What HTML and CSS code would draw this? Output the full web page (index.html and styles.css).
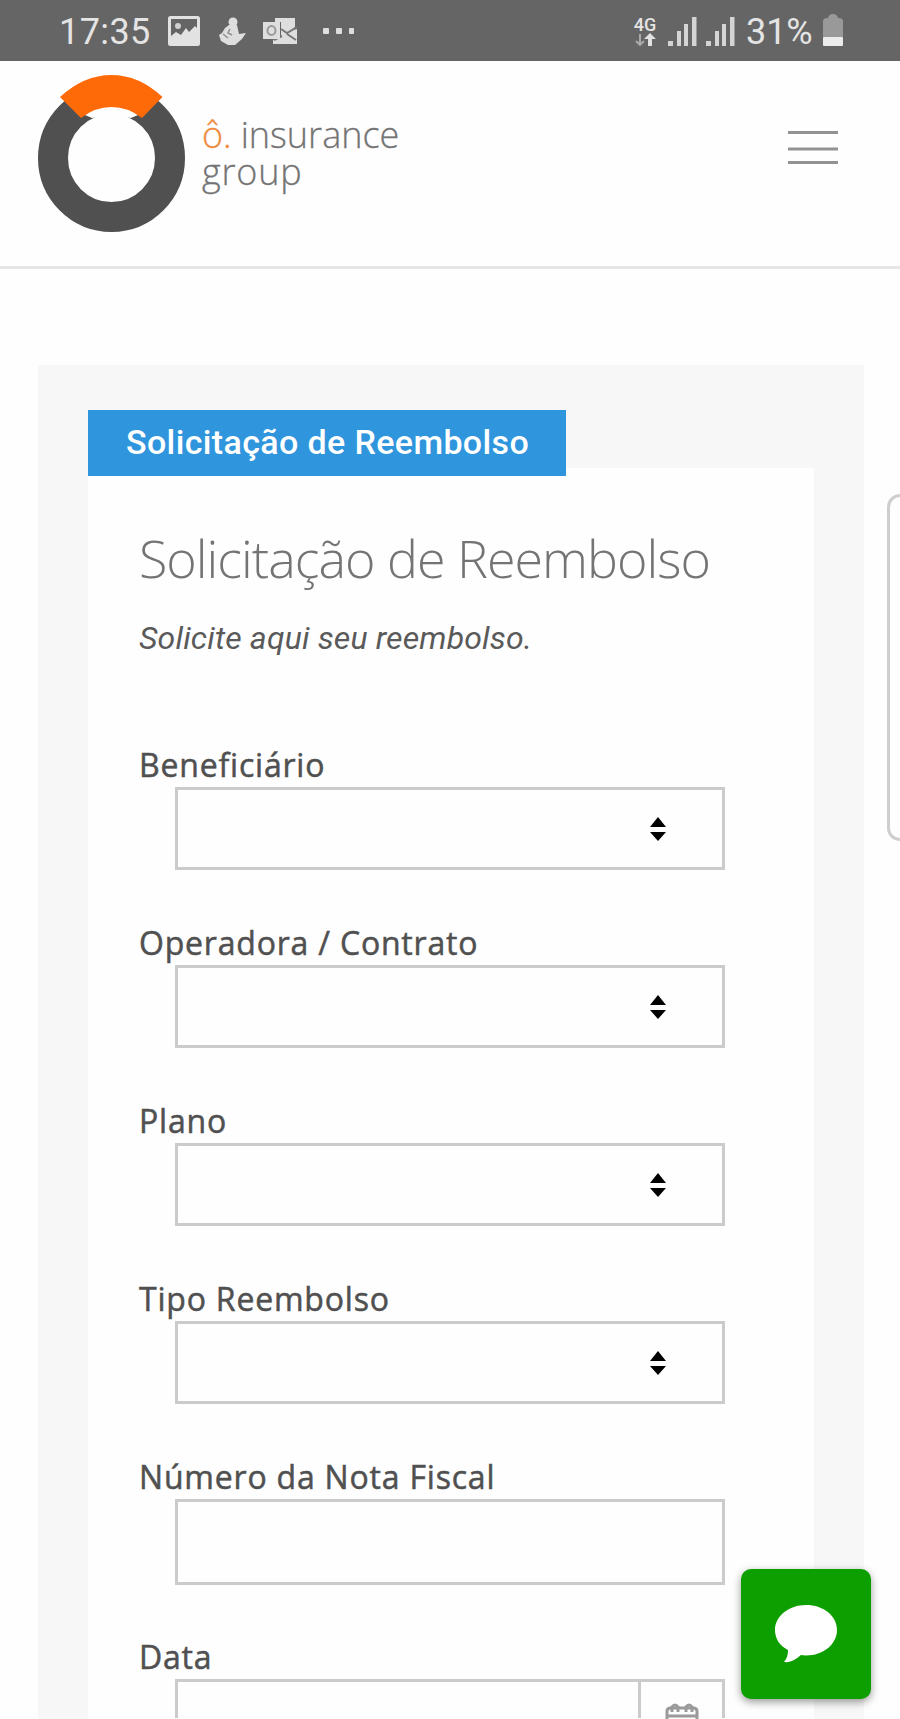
FILE: index.html
```
<!DOCTYPE html>
<html lang="pt-BR">
<head>
<meta charset="utf-8">
<title>Solicitação de Reembolso</title>
<link rel="stylesheet" href="styles.css">
</head>
<body>
<div class="status">
  <div class="status-left">
    <span class="clock">17:35</span>
    <svg class="ic-image" width="32" height="30" viewBox="0 0 32 30"><rect x="1.5" y="1.5" width="29" height="27" rx="1" fill="none" stroke="#e2e2e2" stroke-width="3"/><circle cx="10" cy="10" r="3" fill="#d0d0d0"/><path d="M3 27V20l5-4 5 3 5-7 3 4 6-6 2 2v15z" fill="#e2e2e2"/></svg>
    <svg class="ic-person" width="28" height="28" viewBox="0 0 28 28" fill="#dedede"><circle cx="15" cy="5" r="4.500"/><path d="M11 8h8l2 9 7-1-4 6-7 6h-7l-7-4-2-6 3-2 3-5z"/><path d="M5 17l5 4M12 12l-2 4 4 2" fill="none" stroke="#909090" stroke-width="1.500"/></svg>
    <svg class="ic-mail" width="35" height="28" viewBox="0 0 35 28"><path d="M12 1h20v9l-5 4 7-2v15H10v-4l8-4V5h-6z" fill="#dedede"/><path d="M18 12l6 4 10-6M24 17l9 6M11 23l8-4" fill="none" stroke="#777" stroke-width="2"/><rect x="0" y="5" width="17" height="17" fill="#dedede"/><ellipse cx="8.500" cy="13.500" rx="4" ry="4.500" fill="none" stroke="#999" stroke-width="2"/></svg>
    <svg class="ic-more" width="32" height="6" viewBox="0 0 32 6" fill="#dedede"><rect x="0" y="0" width="6" height="6" rx="1"/><rect x="13" y="0" width="6" height="6" rx="1"/><rect x="26" y="0" width="5" height="6" rx="1"/></svg>
  </div>
  <div class="status-right">
    <div class="net"><span class="net-type">4G</span><svg width="21" height="13" viewBox="0 0 21 13"><path d="M5 1v10M1 8l4 4 4-4" fill="none" stroke="#aaa" stroke-width="2"/><path d="M15 0l6 6h-4v7h-4V6H9z" fill="#e2e2e2"/></svg></div>
    <svg class="sig" width="29" height="29" viewBox="0 0 29 29" fill="#d4d4d4"><rect x="0" y="24" width="5" height="5"/><rect x="9" y="14" width="4" height="15"/><rect x="16" y="7" width="4" height="22"/><rect x="24" y="0" width="4.500" height="29"/></svg>
    <svg class="sig" width="29" height="29" viewBox="0 0 29 29" fill="#d4d4d4"><rect x="0" y="24" width="5" height="5"/><rect x="9" y="14" width="4" height="15"/><rect x="16" y="7" width="4" height="22"/><rect x="24" y="0" width="4.500" height="29"/></svg>
    <span class="pct">31%</span>
    <svg class="batt" width="22" height="33" viewBox="0 0 22 33"><path d="M1 7Q1 4 6 4Q7 0 11 0t5 4q5 0 5 3v16H1z" fill="#999"/><rect x="1" y="23" width="20" height="9" rx="1" fill="#ececec"/></svg>
  </div>
</div>
<header class="header">
  <svg class="logo" width="150" height="160" viewBox="0 0 150 160"><ellipse cx="74.500" cy="83" rx="58.500" ry="59" fill="none" stroke="#505050" stroke-width="30"/><path d="M48 40Q74 20 101 40L94 43 88 42 93 46Q74 60 56 46L61 42 55 43z" fill="#fefefe"/><path d="M23 22Q47 0 74.500 0t51 22L105 43Q91 32 74.500 32T44 43z" fill="#ff6a08"/></svg>
  <div class="brand"><div class="brand-line"><span class="brand-o">ô.</span><span>insurance</span></div><div class="brand-group">group</div></div>
  <svg class="menu" width="52" height="36" viewBox="0 0 52 36" stroke="#929292" stroke-width="3"><path d="M1 3.500h50M1 20h50M1 33.500h50"/></svg>
</header>
<main class="panel">
  <div class="tab">Solicitação de Reembolso</div>
  <section class="card">
    <h1 class="title">Solicitação de Reembolso</h1>
    <p class="intro">Solicite aqui seu reembolso.</p>
    <div class="field"><label>Beneficiário</label><div class="box"><svg width="18" height="26" viewBox="0 0 18 26"><path d="M9 1l8 10H1zM1 16h16l-8 9z"/></svg></div></div>
    <div class="field"><label>Operadora / Contrato</label><div class="box"><svg width="18" height="26" viewBox="0 0 18 26"><path d="M9 1l8 10H1zM1 16h16l-8 9z"/></svg></div></div>
    <div class="field"><label>Plano</label><div class="box"><svg width="18" height="26" viewBox="0 0 18 26"><path d="M9 1l8 10H1zM1 16h16l-8 9z"/></svg></div></div>
    <div class="field"><label>Tipo Reembolso</label><div class="box"><svg width="18" height="26" viewBox="0 0 18 26"><path d="M9 1l8 10H1zM1 16h16l-8 9z"/></svg></div></div>
    <div class="field field-text"><label>Número da Nota Fiscal</label><div class="box"></div></div>
    <div class="field field-last"><label>Data</label><div class="box box-date"><div class="date-btn"><svg width="34" height="16" viewBox="0 0 34 16" fill="none" stroke="#9a9a9a" stroke-width="3"><path d="M2 16V8q0-3 4-3h22q4 0 4 3v8M2 13h30"/><path d="M7 9V4q3-4 6 0v5M21 9V4q3-4 6 0v5"/></svg></div></div></div>
  </section>
</main>
<div class="side-tab"></div>
<div class="chat"><svg width="64" height="60" viewBox="0 0 64 60"><path d="M32 1C15 1 1 12 1 26c0 9 5 16 13 20 0 5-1 8-4 12 7 1 12-3 17-7l5 .5c17 0 31-11 31-25.500S49 1 32 1z" fill="#fff"/></svg></div>
</body>
</html>
```
FILE: styles.css
```
* { box-sizing: border-box; }
body { margin: 0; width: 900px; height: 1719px; overflow: hidden; position: relative; background: #fefefe; color: #505050; font-family: "Open Sans", sans-serif; }
.status { height: 61px; background: #656565; color: #e4e4e4; display: flex; justify-content: space-between; padding: 0 56px 0 59px; font-family: Roboto, sans-serif; }
.status-left, .status-right { display: flex; align-items: center; }
.clock { font-size: 36px; width: 93px; letter-spacing: .4px; padding-top: 2px; }
.ic-image { margin-left: 16px; }
.ic-person { margin-left: 18px; }
.ic-mail { margin-left: 17px; }
.ic-more { margin-left: 25px; }
.net { display: flex; flex-direction: column; align-items: center; width: 24px; margin-right: 11px; }
.net-type { font-size: 18px; line-height: 17px; font-weight: 500; }
.sig { margin-right: 9px; margin-top: 2px; }
.pct { font-size: 36px; width: 69px; margin-left: 2px; padding-top: 3px; letter-spacing: -.1px; }
.batt { margin-left: 7px; }
.header { height: 208px; border-bottom: 3px solid #e6e6e6; display: flex; padding: 14px 61px 0 37px; }
.logo { flex: none; }
.brand { margin: 41px auto 0 15px; font-size: 36px; line-height: 37px; font-weight: 300; color: #747474; white-space: nowrap; -webkit-text-stroke: .3px; }
.brand-line { display: flex; gap: 9px; }
.brand-o { color: #f08a3c; }
.brand-group { letter-spacing: .8px; }
.menu { margin-top: 54px; }
.panel { margin: 96px 0 0 38px; width: 826px; height: 1354px; background: #f7f7f7; padding: 45px 50px 0; }
.tab { position: relative; width: 478px; height: 66px; background: #2f95dc; color: #fff; padding-left: 38px; font: 500 34px/65px Roboto, sans-serif; letter-spacing: .37px; white-space: nowrap; }
.card { margin-top: -8px; height: 1251px; overflow: hidden; background: #fefefe; padding: 54px 50px 0 51px; }
.title { margin: 0; font-size: 52px; line-height: 72px; font-weight: 300; letter-spacing: -1px; color: #747474; white-space: nowrap; }
.intro { margin: 24px 0 0; font: italic 400 32px/40px Roboto, sans-serif; letter-spacing: .15px; color: #5a5a5a; white-space: nowrap; }
.field { height: 178px; }
.intro + .field { margin-top: 86px; }
.field label { display: block; height: 42px; font-size: 32px; line-height: 42px; letter-spacing: .8px; -webkit-text-stroke: .5px; white-space: nowrap; }
.box { height: 83px; width: 550px; margin: 1px 0 0 36px; border: 3px solid #cbcbcb; display: flex; align-items: center; justify-content: flex-end; padding-right: 55px; }
.field-text { height: 180px; }
.field-text .box { height: 86px; }
.field-last { height: 82px; }
.box-date { height: 39px; border-bottom: 0; padding: 0; align-items: stretch; }
.date-btn { width: 84px; border-left: 3px solid #cbcbcb; padding: 21px 0 0 24px; display: flex; }
.side-tab { position: absolute; left: 887px; top: 494px; width: 13px; height: 347px; border: 3px solid #cecece; border-right: 0; border-radius: 14px 0 0 14px; }
.chat { position: absolute; left: 741px; top: 1569px; width: 130px; height: 130px; border-radius: 10px; background: #0d9f00; display: flex; align-items: center; justify-content: center; box-shadow: 0 3px 8px rgba(0,0,0,.4); }
```
